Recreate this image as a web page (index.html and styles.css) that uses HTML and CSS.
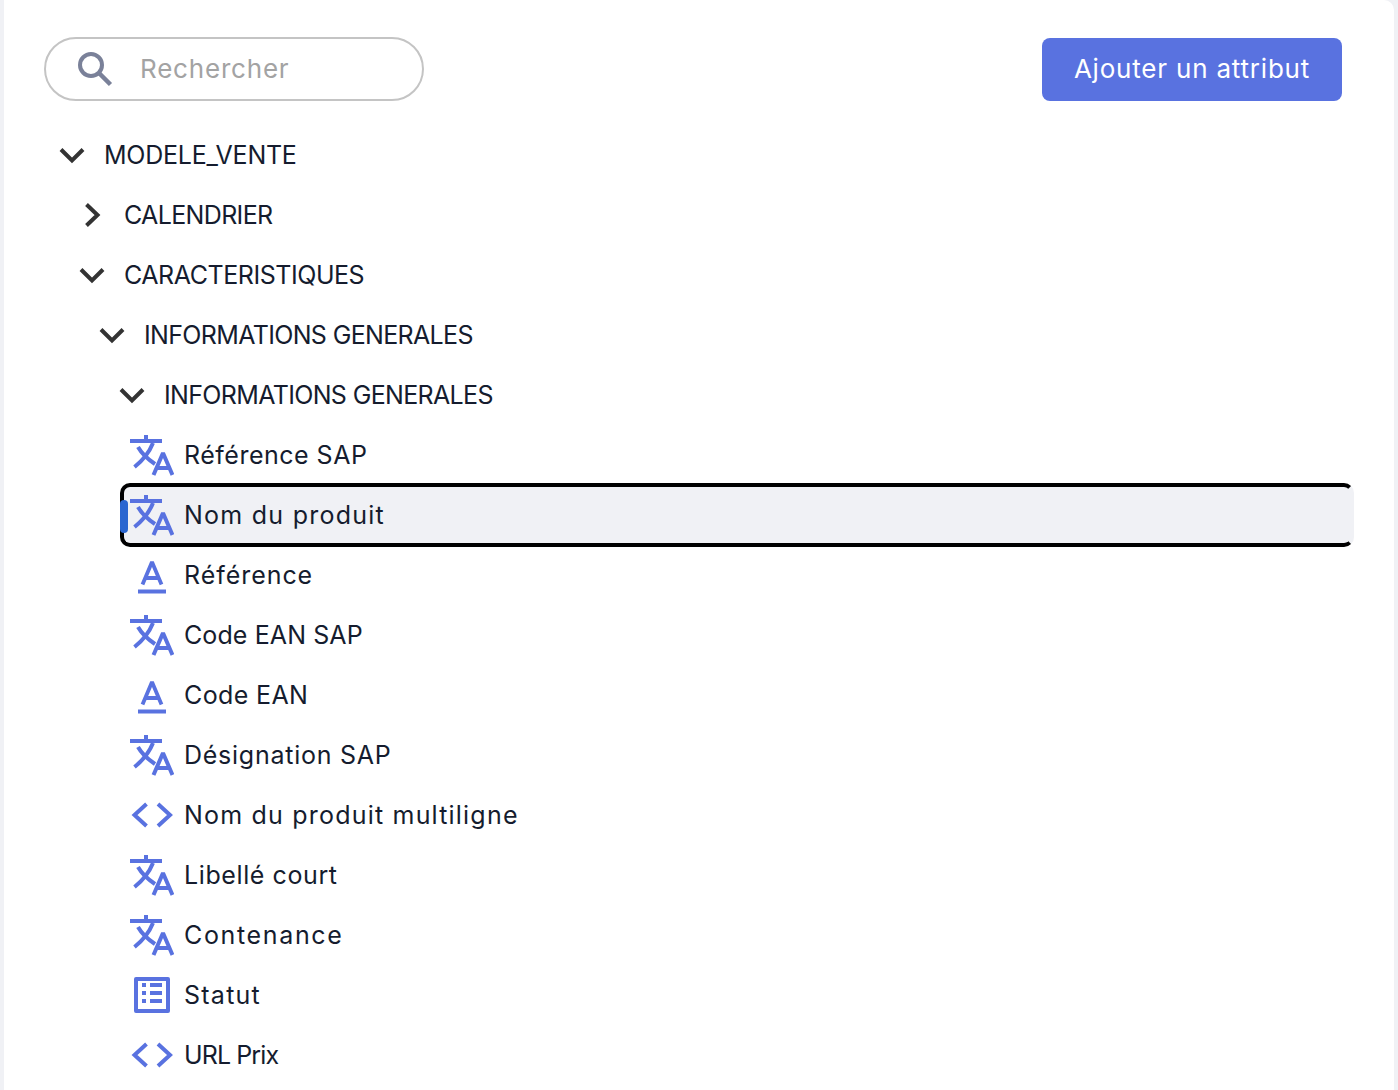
FILE: index.html
```html
<!DOCTYPE html>
<html lang="fr">
<head>
<meta charset="utf-8">
<title>Attributs</title>
<link rel="stylesheet" href="styles.css">
</head>
<body>
<svg class="defs" width="0" height="0" aria-hidden="true">
  <defs>
    <symbol id="i-down" viewBox="0 0 44 24"><path d="M11 6.500 22 17.500 33 6.500" fill="none" stroke="currentColor" stroke-width="4"/></symbol>
    <symbol id="i-right" viewBox="0 0 44 24"><path d="M16.500 1.500 27.500 12 16.500 22.500" fill="none" stroke="currentColor" stroke-width="4"/></symbol>
    <symbol id="i-tr" viewBox="0 0 44 44"><g fill="none" stroke="currentColor" stroke-width="4"><path d="M0 8H32M16 2V8"/><path d="M23 10C19 20 12 28 4.500 34"/><path d="M8 14C12 21 19 27 25 31"/><path d="M23.500 42 33 20 42.500 42M26.500 35H39.500" stroke-linejoin="bevel"/></g></symbol>
    <symbol id="i-a" viewBox="0 0 44 44"><g fill="none" stroke="currentColor" stroke-width="3.800" stroke-linejoin="bevel"><path d="M12.500 31.500 22 9 31.500 31.500M15.500 25H28.500"/></g><path d="M8 36.500H36V40.500H8Z" fill="currentColor"/></symbol>
    <symbol id="i-code" viewBox="0 0 44 44"><path d="M16.500 11 4.500 22 16.500 33M28 11 40 22 28 33" fill="none" stroke="currentColor" stroke-width="4"/></symbol>
    <symbol id="i-list" viewBox="0 0 44 44"><path d="M6 6H38V38H6Z" fill="none" stroke="currentColor" stroke-width="4" stroke-linejoin="round"/><path d="M12 10H16V14H12ZM20 10H32V14H20ZM12 18H16V22H12ZM20 18H32V22H20ZM12 26H16V30H12ZM20 26H32V30H20Z" fill="currentColor"/></symbol>
  </defs>
</svg>
<main class="panel">
  <header class="toolbar">
    <label class="search">
      <svg class="search-icon" width="36" height="36" viewBox="0 0 36 36"><circle cx="14" cy="14" r="11" fill="none" stroke="currentColor" stroke-width="4"/><path d="M22 22 33.500 33.500" fill="none" stroke="currentColor" stroke-width="4.500"/></svg>
      <span class="placeholder">Rechercher</span>
    </label>
    <button class="add" type="button">Ajouter un attribut</button>
  </header>
  <ul class="tree">
    <li><div class="row"><svg class="ico chev"><use href="#i-down"/></svg><span class="ls-m25">MODELE_VENTE</span></div>
      <ul>
        <li><div class="row"><svg class="ico chev"><use href="#i-right"/></svg><span class="ls-m65">CALENDRIER</span></div></li>
        <li><div class="row"><svg class="ico chev"><use href="#i-down"/></svg><span class="ls-m45">CARACTERISTIQUES</span></div>
          <ul>
            <li><div class="row"><svg class="ico chev"><use href="#i-down"/></svg><span class="ls-m65">INFORMATIONS GENERALES</span></div>
              <ul>
                <li><div class="row"><svg class="ico chev"><use href="#i-down"/></svg><span class="ls-m65">INFORMATIONS GENERALES</span></div>
                  <ul class="leaves">
                    <li><div class="row"><svg class="ico"><use href="#i-tr"/></svg><span class="ls-50">Référence SAP</span></div></li>
                    <li><div class="row selected"><svg class="ico"><use href="#i-tr"/></svg><span class="ls-125">Nom du produit</span></div></li>
                    <li><div class="row"><svg class="ico"><use href="#i-a"/></svg><span class="ls-95">Référence</span></div></li>
                    <li><div class="row"><svg class="ico"><use href="#i-tr"/></svg><span class="ls-10">Code EAN SAP</span></div></li>
                    <li><div class="row"><svg class="ico"><use href="#i-a"/></svg><span class="ls-37">Code EAN</span></div></li>
                    <li><div class="row"><svg class="ico"><use href="#i-tr"/></svg><span class="ls-75">Désignation SAP</span></div></li>
                    <li><div class="row"><svg class="ico"><use href="#i-code"/></svg><span class="ls-120">Nom du produit multiligne</span></div></li>
                    <li><div class="row"><svg class="ico"><use href="#i-tr"/></svg><span class="ls-60">Libellé court</span></div></li>
                    <li><div class="row"><svg class="ico"><use href="#i-tr"/></svg><span class="ls-165">Contenance</span></div></li>
                    <li><div class="row"><svg class="ico"><use href="#i-list"/></svg><span class="ls-125">Statut</span></div></li>
                    <li><div class="row"><svg class="ico"><use href="#i-code"/></svg><span class="ls-m90">URL Prix</span></div></li>
                  </ul>
                </li>
              </ul>
            </li>
          </ul>
        </li>
      </ul>
    </li>
  </ul>
</main>
</body>
</html>
```
FILE: styles.css
```css
* { box-sizing: border-box; }
html, body { margin: 0; height: 100%; overflow: hidden; }
body {
  background: #f0f1f5;
  font-family: Inter, "Noto Sans", sans-serif;
  color: #151c2e;
}
.defs { position: absolute; }
.panel {
  height: 1090px;
  margin: 0 4px;
  padding: 37px 40px 0 36px;
  background: #fff;
  border-top-right-radius: 10px;
}
.toolbar {
  display: flex;
  justify-content: space-between;
  align-items: flex-start;
  padding: 0 12px 0 4px;
  margin-bottom: 24px;
}
.search {
  display: flex;
  align-items: center;
  width: 380px;
  height: 64px;
  padding-left: 31px;
  border: 2px solid #c4c4c4;
  border-radius: 32px;
}
.search-icon { color: #7a8199; margin-right: 27px; }
.placeholder { padding-bottom: 2px; font-size: 26px; letter-spacing: 0.8px; color: #a3a3a3; }
.add {
  width: 300px;
  height: 63px;
  margin-top: 1px;
  padding: 0 0 2px;
  border: 0;
  border-radius: 8px;
  background: #5972e0;
  color: #fff;
  font: inherit;
  font-size: 26px;
  letter-spacing: 0.8px;
}
.tree, .tree ul { list-style: none; margin: 0; padding: 0; }
.tree ul { padding-left: 20px; }
.row {
  position: relative;
  display: flex;
  align-items: center;
  gap: 10px;
  height: 60px;
  padding-left: 10px;
  font-size: 25px;
  white-space: nowrap;
}
.ico { flex: none; width: 44px; height: 44px; color: #5972e0; }
.chev { height: 24px; color: #333; }
.selected {
  height: 64px;
  margin: -2px 0;
  padding-left: 6px;
  border: 4px solid #000;
  border-right-color: transparent;
  border-radius: 10px;
  background: #f0f1f5;
}
.selected::before {
  content: "";
  position: absolute;
  left: -4px;
  top: 13px;
  width: 8px;
  height: 33px;
  border-radius: 4px;
  background: #2a66d0;
}
.ls-m90 { letter-spacing: -0.9px; }
.ls-m65 { letter-spacing: -0.65px; }
.ls-m45 { letter-spacing: -0.45px; }
.ls-m25 { letter-spacing: -0.25px; }
.ls-10 { letter-spacing: 0.1px; }
.ls-37 { letter-spacing: 0.37px; }
.ls-50 { letter-spacing: 0.5px; }
.ls-60 { letter-spacing: 0.6px; }
.ls-75 { letter-spacing: 0.75px; }
.ls-95 { letter-spacing: 0.95px; }
.ls-120 { letter-spacing: 1.2px; }
.ls-125 { letter-spacing: 1.25px; }
.ls-165 { letter-spacing: 1.65px; }
```
